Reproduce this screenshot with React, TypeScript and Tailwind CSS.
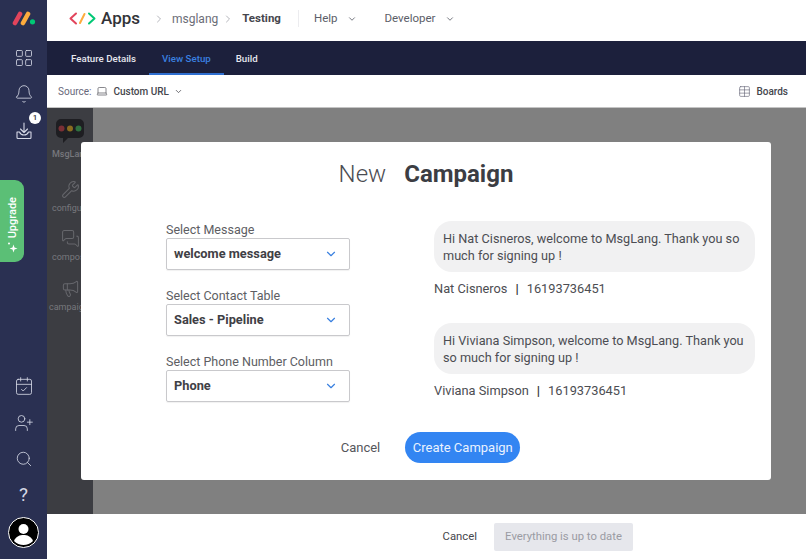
import { ChevronDown, ChevronRight, LayoutGrid, Bell, Laptop, Table, Wrench, MessagesSquare, Megaphone, CalendarCheck, UserPlus, Search } from "lucide-react";

const selects = [
  { label: "Select Message", value: "welcome message" },
  { label: "Select Contact Table", value: "Sales - Pipeline" },
  { label: "Select Phone Number Column", value: "Phone" },
];

const messages = [
  { text: "Hi Nat Cisneros, welcome to MsgLang. Thank you so much for signing up !", name: "Nat Cisneros", phone: "16193736451" },
  { text: "Hi Viviana Simpson, welcome to MsgLang. Thank you so much for signing up !", name: "Viviana Simpson", phone: "16193736451" },
];

const panelItems = [
  { label: "configu", Icon: Wrench, left: "ml-[5px]" },
  { label: "compos", Icon: MessagesSquare, left: "ml-[5px]" },
  { label: "campaig", Icon: Megaphone, left: "ml-[2px]" },
];

function Logo() {
  return (
    <svg width="24" height="15" viewBox="0 0 24 15" fill="none">
      <line x1="3" y1="12" x2="8" y2="3" stroke="#e2445c" strokeWidth="4.6" strokeLinecap="round" />
      <line x1="11" y1="12" x2="16" y2="3" stroke="#fdab3d" strokeWidth="4.6" strokeLinecap="round" />
      <circle cx="20.5" cy="10.8" r="2.6" fill="#00c875" />
    </svg>
  );
}

function Sidebar() {
  return (
    <aside className="relative flex w-[47px] shrink-0 flex-col items-center bg-[#2a3052] text-[#d5d8e6]">
      <div className="mt-[11px] h-[15px]">
        <Logo />
      </div>
      <LayoutGrid className="mt-[22px] h-5 w-5" strokeWidth={1} />
      <Bell className="mt-[16px] h-5 w-5" strokeWidth={1} />
      {/* inbox tray with down arrow */}
      <svg className="mt-[17px]" width="20" height="20" viewBox="0 0 20 20" fill="none" stroke="currentColor" strokeWidth="1.1" strokeLinecap="round" strokeLinejoin="round">
        <path d="M10 2v9M6.500 8 10 11.500 13.500 8" />
        <path d="M5.500 11H3v5.500a1 1 0 0 0 1 1h12a1 1 0 0 0 1-1V11h-2.500c-.8 2-2.500 3-4.500 3s-3.700-1-4.500-3z" />
      </svg>
      <span className="absolute left-[29px] top-[112px] flex h-3 w-3 items-center justify-center rounded-full bg-white text-[8px] font-medium text-[#323338]">
        1
      </span>
      <div className="absolute left-0 top-[180px] flex h-[82px] w-6 flex-col items-center gap-[3px] rounded-r-[9px] bg-[#5bbf76] pt-[17px] text-white">
        <span className="text-[11px] font-medium leading-none [writing-mode:vertical-rl] rotate-180">Upgrade</span>
        <svg width="12" height="12" viewBox="0 0 12 12" fill="white">
          <path d="M7.500 3.500 8.500 6.500 11.500 7.500 8.500 8.500 7.500 11.500 6.500 8.500 3.500 7.500 6.500 6.500z" />
          <circle cx="3" cy="2.500" r="1" />
        </svg>
      </div>
      <div className="mt-auto flex flex-col items-center">
        <CalendarCheck className="h-5 w-5" strokeWidth={1} />
        <UserPlus className="mt-[17px] h-5 w-5" strokeWidth={1} />
        <Search className="mt-[17px] h-[18px] w-[18px]" strokeWidth={1.1} />
        <span className="mt-[17px] text-[19px] leading-[20px]">?</span>
        <div className="mb-[11px] mt-[12px] flex h-[31px] w-[31px] items-center justify-center overflow-hidden rounded-full border border-white bg-black">
          <svg width="27" height="27" viewBox="0 0 27 27">
            <circle cx="13.5" cy="10" r="5" fill="white" />
            <path d="M4 22c2-5 6-6 9.500-6s7.500 1 9.500 6c-2.500 2.500-6 4-9.500 4s-7-1.500-9.500-4z" fill="white" />
          </svg>
        </div>
      </div>
    </aside>
  );
}

function TopBar() {
  return (
    <header className="flex h-[41px] shrink-0 items-center bg-white pb-[4px] pl-[22px] text-[11.500px] text-[#5c5e68]">
      <svg width="27" height="13" viewBox="0 0 27 13" fill="none" strokeWidth="2" strokeLinecap="round" strokeLinejoin="round">
        <path d="M7 1.500 1.500 6.500 7 11.500" stroke="#e2445c" />
        <path d="M11 11 15.500 2" stroke="#fdab3d" />
        <path d="M20 1.500 25.500 6.500 20 11.500" stroke="#00c875" />
      </svg>
      <span className="ml-[5px] text-[17px] font-medium text-[#323338]">Apps</span>
      <ChevronRight className="ml-[13px] h-3 w-3 text-[#b5b6bc]" />
      <span className="ml-[7px] text-[12px] text-[#6b6d77]">msglang</span>
      <ChevronRight className="ml-[4px] h-3 w-3 text-[#b5b6bc]" />
      <span className="ml-[8px] text-[11.500px] font-bold text-[#45464d]">Testing</span>
      <span className="ml-[17px] h-[17px] w-px bg-[#ececef]" />
      <span className="ml-[15px]">Help</span>
      <ChevronDown className="ml-[9px] h-[10px] w-[10px]" />
      <span className="ml-[28px]">Developer</span>
      <ChevronDown className="ml-[10px] h-[10px] w-[10px]" />
    </header>
  );
}

function NavTabs() {
  return (
    <nav className="flex h-[34px] shrink-0 items-stretch bg-[#1c203c] pl-[11px] pt-[4px] text-[9.700px] font-medium text-[#e6e7ee]">
      <span className="flex items-center border-b-2 border-transparent px-[13px]">Feature Details</span>
      <span className="flex items-center border-b-2 border-[#2f6fd0] px-[13px] text-[#3a80e0]">View Setup</span>
      <span className="flex items-center border-b-2 border-transparent px-[12px]">Build</span>
    </nav>
  );
}

function SourceBar() {
  return (
    <div className="flex h-[33px] shrink-0 items-center border-b border-[#c4c4c4] bg-white pl-[11px] pr-[18px] text-[10px] text-[#676879]">
      <span>Source:</span>
      <Laptop className="ml-[5px] h-3 w-3 text-[#45464d]" strokeWidth={1.3} />
      <span className="ml-[5px] font-medium text-[#45464d]">Custom URL</span>
      <ChevronDown className="ml-[5px] h-[9px] w-[9px] text-[#45464d]" />
      <Table className="ml-auto h-[13px] w-[13px] text-[#676879]" strokeWidth={1.2} />
      <span className="ml-[5px] font-medium text-[#45464d]">Boards</span>
    </div>
  );
}

function Modal() {
  return (
    <div className="absolute left-[34px] top-[34px] flex h-[338px] w-[690px] flex-col rounded-[3px] bg-white">
      <h2 className="mt-[14px] flex justify-center gap-[18px] text-[24px] leading-[36px] text-[#4b4c52]">
        <span className="font-light">New</span>
        <span className="font-bold text-[#3c3d43]">Campaign</span>
      </h2>
      <div className="mt-[29px] flex pl-[85px]">
        <div className="mt-[1px] flex w-[184px] flex-col gap-[18px]">
          {selects.map((s) => (
            <div key={s.label}>
              <label className="block text-[12.500px] leading-[16px] text-[#5d5e63]">{s.label}</label>
              <div className="flex h-[32px] items-center justify-between rounded-[2px] border border-[#c9c9cc] pl-[7px] pr-[11px] text-[12.800px] font-bold text-[#3f4045] shadow-[0_1px_1px_rgba(0,0,0,0.06)]">
                {s.value}
                <ChevronDown className="h-[14px] w-[14px] text-[#3a80e0]" strokeWidth={2} />
              </div>
            </div>
          ))}
        </div>
        <div className="ml-[84px] flex w-[321px] flex-col gap-[26px]">
          {messages.map((m) => (
            <div key={m.name}>
              <p className="rounded-[18px] bg-[#f1f1f2] py-[8.500px] pl-[9px] pr-[8px] text-[12.700px] leading-[17px] text-[#4c4d52]">
                {m.text}
              </p>
              <p className="mt-[9px] text-[12.800px] leading-[16px] text-[#4c4d52]">
                {m.name}
                <span className="mx-[8px] font-bold text-[#2e2f33]">|</span>
                {m.phone}
              </p>
            </div>
          ))}
        </div>
      </div>
      <div className="mb-[17px] mt-auto flex items-center justify-center gap-[25px] pl-[9px]">
        <span className="text-[13px] text-[#55565b]">Cancel</span>
        <span className="flex h-[31px] w-[115px] items-center justify-center rounded-[16px] bg-[#3385f2] text-[13px] text-[#eaf2ff]">
          Create Campaign
        </span>
      </div>
    </div>
  );
}

function Workspace() {
  return (
    <section className="relative flex flex-1 bg-[#808080]">
      <div className="flex w-[46px] flex-col items-start overflow-hidden bg-[#3c3d42] text-[9px] text-[#77787d]">
        <svg className="ml-[9px] mt-[11px]" width="28" height="25" viewBox="0 0 28 25">
          <path d="M5 0h18a5 5 0 0 1 5 5v9a5 5 0 0 1-5 5H12l-5 5v-5H5a5 5 0 0 1-5-5V5a5 5 0 0 1 5-5z" fill="#1e1e22" />
          <circle cx="5.500" cy="9.500" r="3" fill="#7a2f35" />
          <circle cx="14" cy="9.500" r="3" fill="#8a6c20" />
          <circle cx="22.500" cy="9.500" r="3" fill="#2f7040" />
        </svg>
        <span className="ml-[5px] mt-[4px] font-medium whitespace-nowrap">MsgLang</span>
        {panelItems.map(({ label, Icon, left }, i) => (
          <div key={label} className={i === 0 ? "mt-[18px]" : "mt-[14px]"}>
            <Icon className="ml-[14px] h-[19px] w-[19px] text-[#66676c]" strokeWidth={1.3} />
            <span className={`${left} mt-[3px] block whitespace-nowrap`}>{label}</span>
          </div>
        ))}
      </div>
      <Modal />
    </section>
  );
}

function Footer() {
  return (
    <footer className="flex h-[45px] shrink-0 items-center justify-end bg-white pr-[173px] text-[11.300px]">
      <span className="pt-[2px] text-[#45464d]">Cancel</span>
      <span className="ml-[17px] flex h-[28px] w-[139px] items-center justify-center rounded-[2px] bg-[#e6e7ec] pt-[2px] text-[#9a9ba3]">
        Everything is up to date
      </span>
    </footer>
  );
}

export default function App() {
  return (
    <div className="flex h-[559px] w-[806px] overflow-hidden bg-white font-['Roboto',sans-serif]">
      <Sidebar />
      <main className="flex min-w-0 flex-1 flex-col">
        <TopBar />
        <NavTabs />
        <SourceBar />
        <Workspace />
        <Footer />
      </main>
    </div>
  );
}
